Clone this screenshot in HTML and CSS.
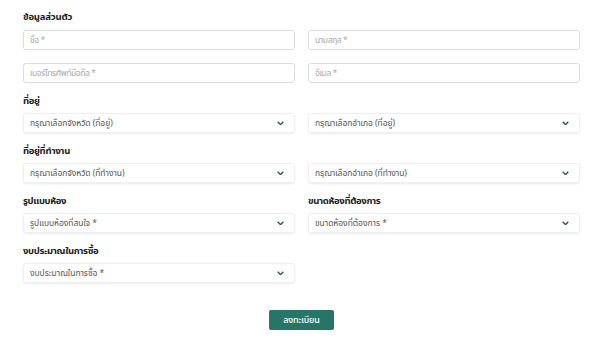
FILE: index.html
```html
<!DOCTYPE html>
<html lang="th">
<head>
<meta charset="utf-8">
<link rel="stylesheet" href="styles.css">
</head>
<body>
<form class="form">
  <h2 class="heading">ข้อมูลส่วนตัว</h2>
  <div class="grid">
    <div class="input"><span class="ph">ชื่อ *</span></div>
    <div class="input"><span class="ph">นามสกุล *</span></div>
    <div class="input"><span class="ph">เบอร์โทรศัพท์มือถือ *</span></div>
    <div class="input"><span class="ph">อีเมล *</span></div>
  </div>

  <div class="grid group">
    <div class="field">
      <div class="label">ที่อยู่</div>
      <div class="select"><span>กรุณาเลือกจังหวัด (ที่อยู่)</span><svg class="chev" viewBox="0 0 10 6"><path d="M1 1l4 4 4-4"/></svg></div>
    </div>
    <div class="field">
      <div class="label"></div>
      <div class="select"><span>กรุณาเลือกอำเภอ (ที่อยู่)</span><svg class="chev" viewBox="0 0 10 6"><path d="M1 1l4 4 4-4"/></svg></div>
    </div>

    <div class="field">
      <div class="label">ที่อยู่ที่ทำงาน</div>
      <div class="select"><span>กรุณาเลือกจังหวัด (ที่ทำงาน)</span><svg class="chev" viewBox="0 0 10 6"><path d="M1 1l4 4 4-4"/></svg></div>
    </div>
    <div class="field">
      <div class="label"></div>
      <div class="select"><span>กรุณาเลือกอำเภอ (ที่ทำงาน)</span><svg class="chev" viewBox="0 0 10 6"><path d="M1 1l4 4 4-4"/></svg></div>
    </div>

    <div class="field">
      <div class="label">รูปแบบห้อง</div>
      <div class="select"><span>รูปแบบห้องที่สนใจ *</span><svg class="chev" viewBox="0 0 10 6"><path d="M1 1l4 4 4-4"/></svg></div>
    </div>
    <div class="field">
      <div class="label">ขนาดห้องที่ต้องการ</div>
      <div class="select"><span>ขนาดห้องที่ต้องการ *</span><svg class="chev" viewBox="0 0 10 6"><path d="M1 1l4 4 4-4"/></svg></div>
    </div>

    <div class="field">
      <div class="label">งบประมาณในการซื้อ</div>
      <div class="select"><span>งบประมาณในการซื้อ *</span><svg class="chev" viewBox="0 0 10 6"><path d="M1 1l4 4 4-4"/></svg></div>
    </div>
  </div>

  <div class="actions">
    <button type="button" class="btn">ลงทะเบียน</button>
  </div>
</form>
</body>
</html>
```

FILE: styles.css
```css
* { box-sizing: border-box; }
html, body { margin: 0; padding: 0; background: #fff; }
body {
  font-family: "Noto Sans Thai", "Noto Sans", "Liberation Sans", sans-serif;
  color: #222;
  width: 600px;
  height: 337px;
  overflow: hidden;
}
.form {
  padding: 10px 20px 0 23px;
}
.heading {
  margin: 0 0 6px;
  font-size: 9.5px;
  line-height: 14px;
  font-weight: 700;
  color: #1a1a1a;
  letter-spacing: -0.2px;
}
.grid {
  display: grid;
  grid-template-columns: 272px 272px;
  column-gap: 13px;
  row-gap: 13px;
}
.group {
  margin-top: 11px;
  row-gap: 11px;
}
.input {
  height: 20px;
  border: 1px solid #dcdcdc;
  border-radius: 3px;
  padding: 0 6px;
  display: flex;
  align-items: center;
}
.ph {
  font-size: 8.5px;
  color: #a9a9a9;
  letter-spacing: -0.4px;
}
.field {
  display: flex;
  flex-direction: column;
  gap: 5px;
}
.label {
  height: 14px;
  font-size: 9.5px;
  line-height: 14px;
  font-weight: 700;
  color: #1a1a1a;
  letter-spacing: -0.35px;
}
.select {
  height: 20px;
  border: 1px solid #efefef;
  border-radius: 3px;
  box-shadow: 0 1px 2px rgba(0,0,0,0.08);
  padding: 0 10px 0 6px;
  display: flex;
  align-items: center;
  justify-content: space-between;
  font-size: 8.5px;
  color: #555;
  letter-spacing: -0.05px;
}
.chev {
  width: 7px;
  height: 4.5px;
  fill: none;
  stroke: #1d5e51;
  stroke-width: 2;
}
.actions {
  display: flex;
  justify-content: center;
  margin-top: 27px;
}
.btn {
  width: 65px;
  height: 20px;
  border: 0;
  border-radius: 2px;
  background: #277567;
  color: #fff;
  font-family: inherit;
  font-size: 9px;
  font-weight: 500;
  letter-spacing: -0.2px;
  padding: 0;
}
```
